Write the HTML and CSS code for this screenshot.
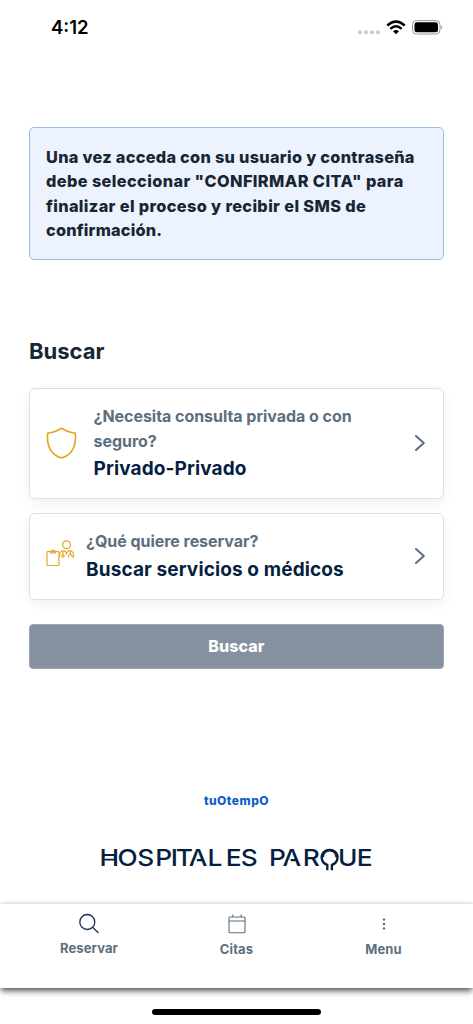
FILE: index.html
```html
<!DOCTYPE html>
<html lang="es">
<head>
<meta charset="utf-8">
<meta name="viewport" content="width=device-width, initial-scale=1">
<title>Buscar</title>
<link rel="stylesheet" href="styles.css">
</head>
<body>
<div class="screen">
  <header class="status">
    <span class="time">4:12</span>
    <svg class="status-icons" width="86" height="18" viewBox="0 0 86 18">
      <g fill="#cacaca"><circle cx="3" cy="12.2" r="2"/><circle cx="9" cy="12.2" r="2"/><circle cx="15" cy="12.2" r="2"/><circle cx="20.800" cy="12.2" r="2"/></g>
      <g fill="none" stroke="#000" stroke-width="2.500"><path d="M30.300 5.500Q39 -2.500 47.700 5.500"/><path d="M33.400 8.800Q39 3.700 44.600 8.800"/></g>
      <path d="M36 11.200Q39 8.800 42 11.200L39 14.200Z"/>
      <rect x="55.500" y=".6" width="27.500" height="13.400" rx="4" fill="#fff" stroke="#999" stroke-width="1"/>
      <rect x="57.500" y="2.300" width="23.500" height="10" rx="2.300"/>
      <path d="M84 5.200Q86 7.300 84 9.400Z" fill="#999"/>
    </svg>
  </header>

  <main>
    <p class="notice"><span class="l1">Una vez acceda con su usuario y contraseña</span><br><span class="l2">debe seleccionar "CONFIRMAR CITA" para</span><br><span class="l3">finalizar el proceso y recibir el SMS de</span><br><span class="l4">confirmación.</span></p>

    <h1>Buscar</h1>

    <section class="card card-insurance">
      <svg class="shield" width="31" height="32" viewBox="0 0 31 32"><path d="M15.500 1.200C11.500 4 6.500 5.700 1.700 6.200C.7 17 3.500 27.500 15.500 31C27.500 27.500 30.300 17 29.300 6.200C24.500 5.700 19.500 4 15.500 1.200Z"/></svg>
      <div class="copy">
        <div class="label">¿Necesita consulta privada o con<br>seguro?</div>
        <div class="value">Privado-Privado</div>
      </div>
      <svg class="chevron" width="12" height="18" viewBox="0 0 12 18"><path d="M2 2L9.800 9L2 16"/></svg>
    </section>

    <section class="card card-service">
      <svg class="doctor" width="29" height="28" viewBox="0 0 29 28">
        <rect x="1" y="11.500" width="12" height="14" rx=".8"/><path d="M4.300 12.800V11H6Q7 8.500 8 11H9.700V12.800Z"/>
        <circle cx="20.500" cy="4.800" r="3.900"/>
        <path d="M13.600 16.800V14Q14 11 18 10.500L20.500 12.700L23 10.500Q27 11 27.500 14V17.200M16.800 11V14.600M24.300 11V14M22.600 17V15.800Q24.300 12.800 26 15.800V17M20.500 12.700V14.500"/><circle cx="17" cy="16" r="1.200"/>
      </svg>
      <div class="copy">
        <div class="label">¿Qué quiere reservar?</div>
        <div class="value">Buscar servicios o médicos</div>
      </div>
      <svg class="chevron" width="12" height="18" viewBox="0 0 12 18"><path d="M2 2L9.800 9L2 16"/></svg>
    </section>

    <button class="search" type="button">Buscar</button>
  </main>

  <footer>
    <div class="tuo">tuOtempO</div>
    <svg class="brand" width="275" height="28" viewBox="0 0 275 28">
      <g class="brand-text" transform="scale(1.12 1)">
        <text y="20" x="9.200 25.600 41.700 57.700 67.200 76.300 88.400 103.600 120.300 134.200">HOSPITALES</text>
        <text y="20" x="159.300 172.100 189.600 205.900 222.100 237.300">PARQUE</text>
      </g>
      <g class="brand-cut">
        <rect x="5.800" y="8" width="9" height="7"/>
        <path d="M94.800 16.500L95.900 13.200H98V16.500ZM188.600 16.500L189.700 13.200H191.800V16.500Z"/>
        <rect x="221" y="11.500" width="19" height="13"/>
      </g>
      <g class="brand-mark">
        <path class="bars" d="M4.500 9H16M4.500 13.600H16"/>
        <path d="M228.300 24.300V18.900A7.900 7.700 0 1 1 232.900 18.900V24.300"/>
      </g>
    </svg>
  </footer>

  <nav>
    <a class="tab reserve"><svg width="22" height="22" viewBox="0 0 22 22" fill="none" stroke="#14304f" stroke-width="1.300" stroke-linecap="round"><circle cx="9.300" cy="9" r="7.500"/><path d="M14.700 14.400L20 19.500"/></svg><span>Reservar</span></a>
    <a class="tab dates"><svg width="22" height="22" viewBox="0 0 22 22" fill="none" stroke="#5d7083" stroke-width="1.100"><rect x="3" y="4" width="16" height="15.700" rx="1"/><path d="M3 8H19M6.800 1.500V4M15.200 1.500V4"/></svg><span>Citas</span></a>
    <a class="tab menu"><svg width="22" height="22" viewBox="0 0 22 22" fill="#526a80"><circle cx="11" cy="6.500" r="1.200"/><circle cx="11" cy="11" r="1.200"/><circle cx="11" cy="15.500" r="1.200"/></svg><span>Menu</span></a>
  </nav>
  <div class="home"></div>
</div>
</body>
</html>
```
FILE: styles.css
```css
* { box-sizing: border-box; }
body { margin: 0; background: #fff; font-family: Inter, sans-serif; color: #182532; }
.screen { width: 473px; height: 1024px; overflow: hidden; display: flex; flex-direction: column; }
.status { height: 127px; flex: none; padding: 15px 30px 0 51px; display: flex; justify-content: space-between; align-items: flex-start; }
.time { font-size: 18.500px; line-height: 25px; font-weight: 600; color: #000; }
.status-icons { margin-top: 5px; }
main { padding: 0 29px; display: flex; flex-direction: column; }
.notice { width: 415px; height: 133px; margin: 0; padding: 17px 16px; border: 1px solid #9dbce3; border-radius: 5px; background: #ecf3fe; font-size: 16.300px; line-height: 24.300px; font-weight: 800; white-space: nowrap; }
.l1 { letter-spacing: .29px; }
.l2 { letter-spacing: .4px; }
.l3 { letter-spacing: .37px; }
.l4 { letter-spacing: .2px; }
h1 { margin: 76px 0 22px; height: 30px; line-height: 30px; font-size: 22px; font-weight: 700; }
.card { width: 415px; border: 1px solid #dedfe1; border-radius: 6px; background: #fff; box-shadow: 0 4px 12px rgba(0,0,0,.06); display: flex; align-items: center; padding: 0 17px 0 16px; }
.card-insurance { height: 111px; margin-bottom: 14px; }
.card-service { height: 87px; margin-bottom: 24px; }
.shield { margin: -2px 16.500px 0 0; fill: none; stroke: #e0a619; stroke-width: 1.600; stroke-linejoin: round; }
.doctor { margin: -6px 11.500px 0 -.5px; fill: none; stroke: #e0aa27; stroke-width: 1.200; stroke-linecap: round; stroke-linejoin: round; }
.copy { flex: 1; white-space: nowrap; padding-top: 1px; }
.label { font-size: 16px; line-height: 24.300px; font-weight: 700; color: #5d6e7e; letter-spacing: -.04px; }
.value { font-size: 19px; line-height: 31px; font-weight: 700; color: #061f41; letter-spacing: .12px; }
.chevron { margin-top: -2px; fill: none; stroke: #5d6e80; stroke-width: 2; stroke-linecap: round; stroke-linejoin: round; }
.search { width: 415px; height: 45px; border: 1px solid #9ba6b2; border-radius: 4px; background: #8590a0; color: #fff; font: 800 16px/24px Inter, sans-serif; letter-spacing: .1px; padding: 0 0 2px; }
footer { display: flex; flex-direction: column; align-items: center; padding-top: 121px; }
.tuo { color: #105bc8; font-size: 12px; line-height: 22px; font-weight: 800; letter-spacing: .5px; }
.brand { margin-top: 34px; }
.brand-text { font: 500 23.500px Inter, sans-serif; fill: #061f41; text-anchor: middle; }
.brand-cut { fill: #fff; }
.brand-mark { fill: none; stroke: #061f41; stroke-width: 2.300; }
.bars { stroke-width: 1.900; }
nav { height: 84px; flex: none; margin-top: auto; display: grid; grid-template-columns: repeat(3, 147px); justify-content: center; background: #fff; box-shadow: 0 -1px 3px rgba(0,0,0,.15), 0 4px 6px -1px rgba(0,0,0,.65); }
.tab { display: flex; flex-direction: column; align-items: center; padding: 9px 0 0; font-size: 13px; font-weight: 700; line-height: 20px; color: #5d6e7e; letter-spacing: .1px; }
.tab span { margin-top: 4px; }
.reserve { padding-right: 1px; }
.reserve span { margin-top: 3px; }
.home { flex: none; width: 169px; height: 6px; margin: 21px auto 9px; border-radius: 3px; background: #000; }
```
